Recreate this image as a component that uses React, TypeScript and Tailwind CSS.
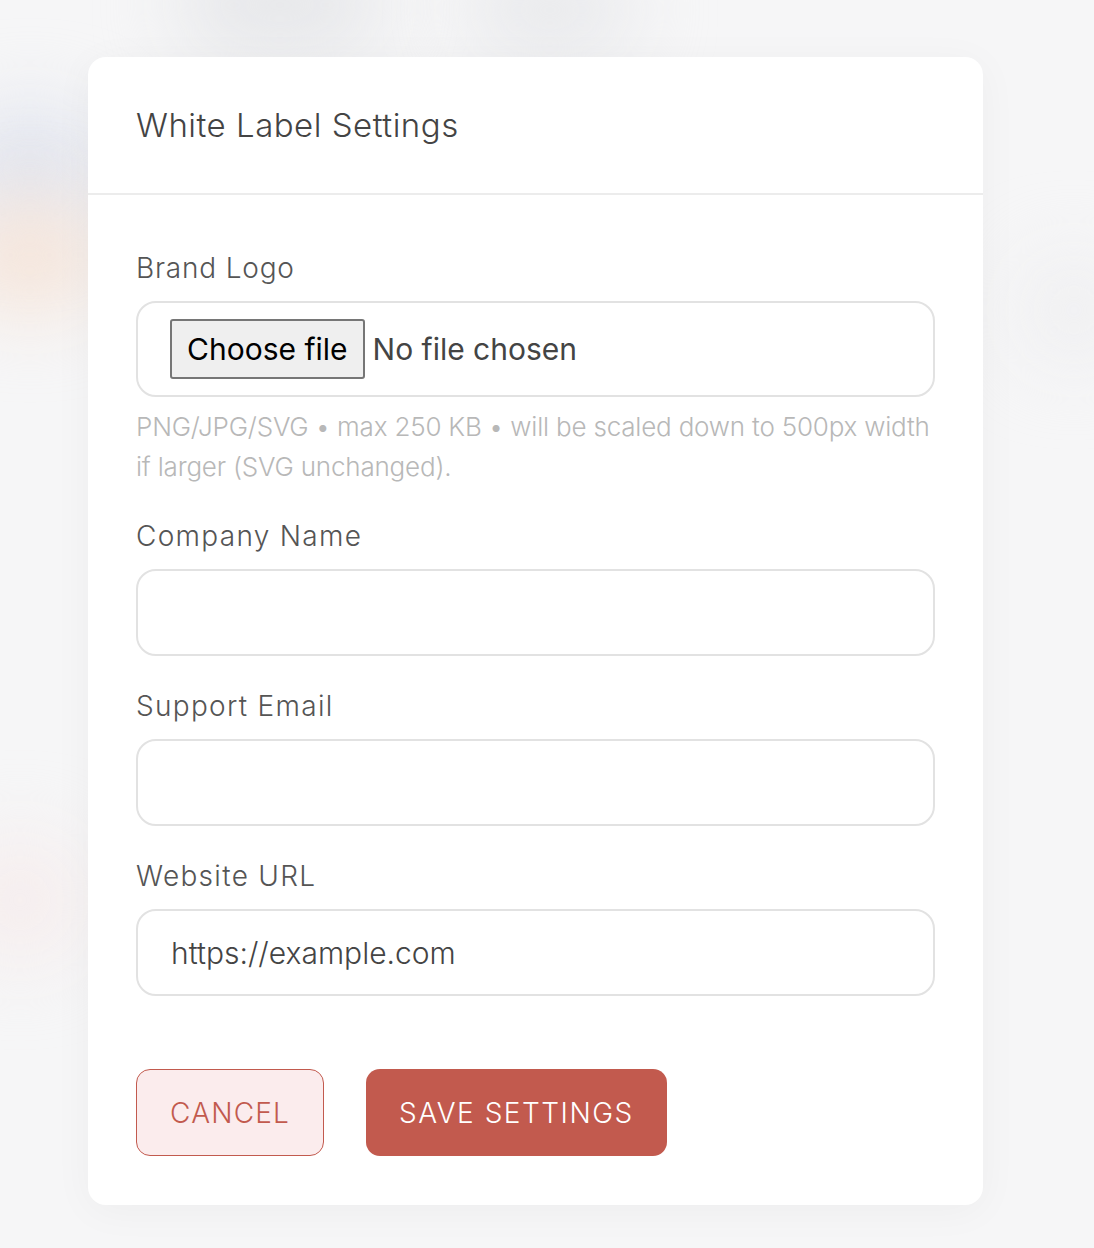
import { useState } from "react";

type FieldProps = {
  label: string;
  placeholder?: string;
  defaultValue?: string;
};

function Field({ label, placeholder, defaultValue }: FieldProps) {
  return (
    <div className="flex flex-col gap-[13px] mb-[30px]">
      <label className="text-[28px] leading-[40px] tracking-[1.3px] text-[#555]">{label}</label>
      <input
        className="h-[87px] w-full rounded-[20px] border-2 border-[#e2e2e2] bg-white px-[33px] text-[30px] text-[#444] outline-none"
        placeholder={placeholder}
        defaultValue={defaultValue}
      />
    </div>
  );
}

export default function App() {
  const [fileName, setFileName] = useState<string | null>(null);

  return (
    <div
      className="relative min-h-[1248px] w-full overflow-hidden bg-[#f6f6f7] font-light"
      style={{ fontFamily: "Inter, 'Open Sans', sans-serif" }}
    >
      {/* blurred page behind the modal */}
      <div className="pointer-events-none absolute inset-0">
        <div className="absolute left-[180px] top-[-40px] h-[90px] w-[200px] rounded-full bg-[#e4e5e8] blur-2xl" />
        <div className="absolute left-[470px] top-[-30px] h-[80px] w-[160px] rounded-full bg-[#e6e7ea] blur-2xl" />
        <div className="absolute left-[-40px] top-[110px] h-[120px] w-[140px] rounded-full bg-[#dfe3ee] blur-2xl" />
        <div className="absolute left-[-40px] top-[200px] h-[110px] w-[140px] rounded-full bg-[#f6e4d8] blur-2xl" />
        <div className="absolute left-[-40px] top-[840px] h-[120px] w-[120px] rounded-full bg-[#f6ecec] blur-2xl" />
        <div className="absolute right-[-30px] top-[260px] h-[100px] w-[100px] rounded-full bg-[#eeeef0] blur-2xl" />
      </div>

      <div className="relative ml-[88px] pt-[57px]">
        <div className="w-[895px] rounded-[18px] bg-white shadow-[0_6px_40px_rgba(0,0,0,0.04)]">
          <div className="border-b-2 border-[#ececec] px-12 pb-[46px] pt-[46px]">
            <h1 className="text-[33px] leading-[44px] tracking-[0.5px] text-[#444]">White Label Settings</h1>
          </div>

          <div className="px-12 pb-[49px] pt-[53px]">
            <div className="flex flex-col gap-[13px]">
              <label className="text-[28px] leading-[40px] tracking-[0.8px] text-[#555]">Brand Logo</label>
              <label className="flex h-[96px] w-full cursor-pointer items-center rounded-[20px] border-2 border-[#e2e2e2] bg-white pl-[32px]">
                <input
                  type="file"
                  className="hidden"
                  onChange={(e) => setFileName(e.target.files?.[0]?.name ?? null)}
                />
                <span className="flex h-[60px] items-center rounded-[3px] border-2 border-[#767676] bg-[#efefef] px-[15px] text-[30px] font-normal text-black">
                  Choose file
                </span>
                <span className="ml-[8px] text-[30px] font-normal text-[#444]">
                  {fileName ?? "No file chosen"}
                </span>
              </label>
            </div>
            <p className="mb-[29px] mt-[10px] text-[26px] leading-[40px] tracking-[-0.2px] text-[#b8b8b8]">
              PNG/JPG/SVG • max 250 KB • will be scaled down to 500px width if larger (SVG unchanged).
            </p>

            <Field label="Company Name" />
            <Field label="Support Email" />
            <Field label="Website URL" defaultValue="https://example.com" />

            <div className="mt-[73px] flex gap-[42px]">
              <button className="h-[87px] rounded-[14px] border border-[#c25a4e] bg-[#fbeced] px-[33px] text-[28px] uppercase tracking-[1.2px] text-[#c25a4e]">
                Cancel
              </button>
              <button className="h-[87px] rounded-[14px] bg-[#c25a4e] px-[33px] text-[28px] uppercase tracking-[1.5px] text-white">
                Save Settings
              </button>
            </div>
          </div>
        </div>
      </div>
    </div>
  );
}
